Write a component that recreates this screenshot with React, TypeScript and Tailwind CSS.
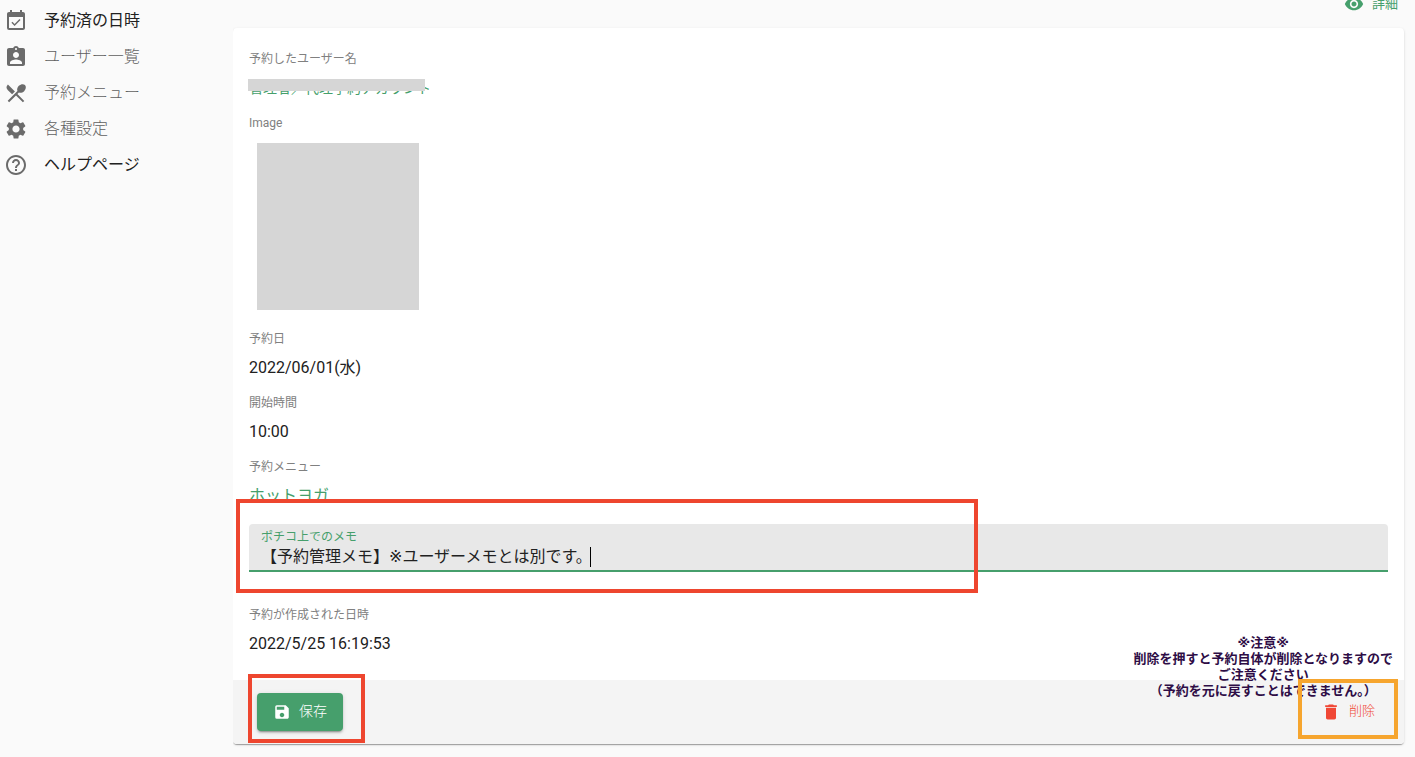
import React from 'react';
import {
  MdAssignmentInd,
  MdDelete,
  MdEventAvailable,
  MdHelpOutline,
  MdRemoveRedEye,
  MdRestaurantMenu,
  MdSave,
  MdSettings,
} from 'react-icons/md';

const menu = [
  { label: '予約済の日時', icon: MdEventAvailable, active: true },
  { label: 'ユーザー一覧', icon: MdAssignmentInd, active: false },
  { label: '予約メニュー', icon: MdRestaurantMenu, active: false },
  { label: '各種設定', icon: MdSettings, active: false },
  { label: 'ヘルプページ', icon: MdHelpOutline, active: true },
];

function Sidebar() {
  return (
    <nav className="w-[233px] shrink-0 pt-[3px]">
      <ul>
        {menu.map(({ label, icon: Icon, active }) => (
          <li key={label}>
            <a
              href="#"
              className={
                active
                  ? 'flex h-9 items-center gap-4 pl-1 text-base text-[#212121]'
                  : 'flex h-9 items-center gap-4 pl-1 text-base font-light text-[#606060]'
              }
            >
              <Icon className="size-6 text-[#6b6b6b]" />
              {label}
            </a>
          </li>
        ))}
      </ul>
    </nav>
  );
}

function Field({ label, children }: { label: string; children: React.ReactNode }) {
  return (
    <div>
      <dt className="text-xs leading-4 text-[#808080]">{label}</dt>
      <dd className="mt-[9px] text-base leading-6">{children}</dd>
    </div>
  );
}

function Memo() {
  return (
    <div className="relative mt-4">
      <div className="relative h-12 rounded-t border-b-2 border-[#469f6c] bg-[#e8e8e8] px-3 pt-[5px]">
        <label htmlFor="memo" className="block text-xs leading-4 text-[#469f6c]">
          ポチコ上でのメモ
        </label>
        <input
          id="memo"
          type="text"
          defaultValue="【予約管理メモ】※ユーザーメモとは別です。"
          className="block h-6 w-full bg-transparent text-base outline-none"
        />
        <span className="absolute top-[23px] left-[341px] h-5 w-px bg-black" />
      </div>
      <div className="pointer-events-none absolute -top-[25px] -left-[13px] h-[94px] w-[742px] border-4 border-[#ee462f]" />
    </div>
  );
}

function Toolbar() {
  return (
    <div className="relative flex h-16 items-center justify-between rounded-b bg-[#f4f4f4] px-6">
      <div className="relative">
        <button
          type="button"
          className="flex h-[38px] items-center gap-2 rounded bg-[#469f6c] px-4 text-sm font-light text-white shadow-[0_3px_1px_-2px_rgba(0,0,0,0.2),0_2px_2px_0_rgba(0,0,0,0.14),0_1px_5px_0_rgba(0,0,0,0.12)]"
        >
          <MdSave className="size-[18px]" />
          <span className="pb-0.5">保存</span>
        </button>
        <div className="pointer-events-none absolute -top-[19px] -left-[9px] h-[69px] w-[117px] border-4 border-[#ee462f]" />
      </div>
      <button type="button" className="flex h-[30px] items-center gap-2 px-[5px] text-[13px] font-light text-[#f04735]">
        <MdDelete className="size-5" />
        <span className="pb-0.5">削除</span>
      </button>
      <p className="absolute right-[11px] bottom-[45px] text-center text-[13px] leading-4 font-bold text-[#2e0d46]">
        ※注意※
        <br />
        削除を押すと予約自体が削除となりますので
        <br />
        ご注意ください
        <br />
        （予約を元に戻すことはできません。）
      </p>
      <div className="pointer-events-none absolute -top-px right-1.5 h-[60px] w-[100px] border-4 border-[#f6a52e]" />
    </div>
  );
}

function App() {
  return (
    <div className="flex min-h-screen bg-[#fafafa] font-['Roboto','DejaVu_Sans','Noto_Sans_CJK_JP',sans-serif] text-[#212121]">
      <Sidebar />
      <main className="min-w-0 flex-1 overflow-hidden pr-[11px]">
        <div className="-mt-[11px] flex justify-end">
          <a href="#" className="flex h-[30px] items-center gap-2 px-1.5 text-[13px] text-[#469f6c]">
            <MdRemoveRedEye className="size-5" />
            詳細
          </a>
        </div>
        <form className="mt-[9px] rounded bg-white shadow-[0_2px_1px_-1px_rgba(0,0,0,0.2),0_1px_1px_0_rgba(0,0,0,0.14),0_1px_3px_0_rgba(0,0,0,0.12)]">
          <div className="px-4 pt-[23px] pb-6">
            <dl className="flex flex-col gap-[15px]">
              <Field label="予約したユーザー名">
                <span className="relative inline-block">
                  <a href="#" className="text-sm leading-6 text-[#469f6c]">
                    管理者／代理予約アカウント
                  </a>
                  <span className="absolute top-[3px] -left-px h-3 w-[177px] bg-[#d6d6d6]" />
                </span>
              </Field>
              <div>
                <dt className="text-xs leading-4 text-[#808080]">Image</dt>
                <dd className="mx-2 mt-3 mb-1.5 h-[167px] w-[162px] bg-[#d6d6d6]" />
              </div>
              <Field label="予約日">2022/06/01(水)</Field>
              <Field label="開始時間">10:00</Field>
              <Field label="予約メニュー">
                <a href="#" className="text-[#469f6c]">
                  ホットヨガ
                </a>
              </Field>
            </dl>
            <Memo />
            <dl className="mt-[35px]">
              <Field label="予約が作成された日時">2022/5/25 16:19:53</Field>
            </dl>
          </div>
          <Toolbar />
        </form>
      </main>
    </div>
  );
}
export default App;
